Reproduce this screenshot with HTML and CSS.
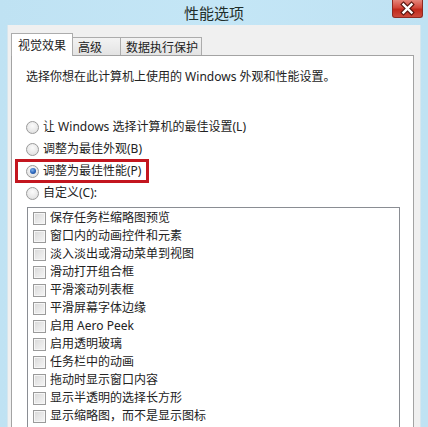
FILE: index.html
```html
<!DOCTYPE html>
<html lang="zh-CN">
<head>
<meta charset="utf-8">
<title>性能选项</title>
<link rel="stylesheet" href="styles.css">
</head>
<body>
<div class="window">
  <div class="titlebar">
    <span class="spacer"></span>
    <span class="title">性能选项</span>
    <span class="close">
      <svg width="31" height="18" viewBox="0 0 31 18">
        <path d="M11.5 4.5 L19.5 12.5 M19.5 4.5 L11.5 12.5" stroke="#5a1610" stroke-width="4.6" stroke-linecap="square" fill="none"/>
        <path d="M11.5 4.5 L19.5 12.5 M19.5 4.5 L11.5 12.5" stroke="#ffffff" stroke-width="2.4" stroke-linecap="square" fill="none"/>
      </svg>
    </span>
  </div>
  <div class="frame">
    <div class="tabs">
      <div class="tab active">视觉效果</div>
      <div class="tab tab-short">高级</div>
      <div class="tab tab-long">数据执行保护</div>
    </div>
    <div class="page">
      <p class="desc">选择你想在此计算机上使用的 Windows 外观和性能设置。</p>
      <div class="options">
        <div class="opt"><span class="radio"></span>让 Windows 选择计算机的最佳设置(L)</div>
        <div class="opt"><span class="radio"></span>调整为最佳外观(B)</div>
        <div class="opt highlight"><span class="radio checked"></span>调整为最佳性能(P)</div>
        <div class="opt"><span class="radio"></span>自定义(C):</div>
      </div>
      <div class="listbox">
        <div class="item"><span class="check"></span>保存任务栏缩略图预览</div>
        <div class="item"><span class="check"></span>窗口内的动画控件和元素</div>
        <div class="item"><span class="check"></span>淡入淡出或滑动菜单到视图</div>
        <div class="item"><span class="check"></span>滑动打开组合框</div>
        <div class="item"><span class="check"></span>平滑滚动列表框</div>
        <div class="item"><span class="check"></span>平滑屏幕字体边缘</div>
        <div class="item"><span class="check"></span>启用 Aero Peek</div>
        <div class="item"><span class="check"></span>启用透明玻璃</div>
        <div class="item"><span class="check"></span>任务栏中的动画</div>
        <div class="item"><span class="check"></span>拖动时显示窗口内容</div>
        <div class="item"><span class="check"></span>显示半透明的选择长方形</div>
        <div class="item"><span class="check"></span>显示缩略图，而不是显示图标</div>
      </div>
    </div>
  </div>
</div>
</body>
</html>
```

FILE: styles.css
```css
html, body {
  margin: 0;
  padding: 0;
}
body {
  width: 428px;
  height: 427px;
  overflow: hidden;
  background: linear-gradient(90deg, #bfe2f3 0%, #c4e6f6 50%, #bfe2f3 100%);
  font-family: "Noto Sans", "Noto Sans CJK SC", sans-serif;
  font-size: 12px;
  color: #222;
}
.window {
  height: 427px;
  display: flex;
  flex-direction: column;
}
.titlebar {
  height: 25px;
  flex: none;
  display: grid;
  grid-template-columns: 1fr auto 1fr;
  align-items: start;
}
.title {
  font-family: "Noto Sans CJK SC", sans-serif;
  font-size: 15px;
  line-height: 25px;
  color: #1f2e2a;
}
.close {
  justify-self: end;
  margin-right: 5px;
  width: 31px;
  height: 18px;
  box-sizing: border-box;
  border: 1px solid #8e2a22;
  border-top: none;
  border-radius: 0 0 3px 3px;
  background: linear-gradient(#e6857a 0%, #d3473a 45%, #c1291c 55%, #cc4a3c 100%);
  display: flex;
}
.close svg {
  display: block;
  margin: 0 -1px;
}
.frame {
  flex: 1;
  margin: 0 7px;
  background: #f0f0f0;
  padding: 8px 7px 0 4px;
  display: flex;
  flex-direction: column;
  min-height: 0;
  box-shadow: inset 1px 0 0 #d6e6ee, inset -1px 0 0 #d6e6ee;
}
.tabs {
  display: flex;
  align-items: flex-end;
  height: 22px;
  flex: none;
}
.tab {
  height: 18px;
  box-sizing: border-box;
  border: 1px solid #acacac;
  border-bottom: none;
  margin-left: -1px;
  padding: 1px 4px 0 5px;
  line-height: 16px;
  background: linear-gradient(#f3f3f3, #e3e3e3);
  font-family: "Noto Sans CJK SC", sans-serif;
  white-space: nowrap;
}
.tab.active {
  margin-left: 0;
  height: 23px;
  padding: 1px 6px 0 6px;
  line-height: 20px;
  background: #fff;
  margin-bottom: -1px;
  position: relative;
  z-index: 1;
}
.tab.tab-short {
  padding-right: 18px;
}
.tab.tab-long {
  padding-right: 3px;
}
.page {
  flex: 1;
  border: 1px solid #a3a3a3;
  border-bottom: none;
  background: #fff;
  padding: 12px 13px 0 14px;
  overflow: hidden;
  min-height: 0;
}
.desc {
  margin: 0;
  line-height: 18px;
  white-space: nowrap;
}
.options {
  margin-top: 32px;
  display: flex;
  flex-direction: column;
  gap: 4px;
}
.opt {
  display: flex;
  align-items: center;
  gap: 4px;
  height: 18px;
  line-height: 18px;
  white-space: nowrap;
}
.opt.highlight {
  align-self: flex-start;
  border: 3px solid #c3161f;
  margin: -3px 0 -3px -11px;
  padding: 0 5px 0 8px;
}
.radio {
  width: 13px;
  height: 13px;
  box-sizing: border-box;
  border-radius: 50%;
  border: 1px solid #9a9a9a;
  background: radial-gradient(circle at 50% 35%, #fbfbfb 0%, #e8e8e8 60%, #d8d8d8 100%);
  flex: none;
  display: flex;
  align-items: center;
  justify-content: center;
}
.radio.checked::after {
  content: "";
  width: 6px;
  height: 6px;
  border-radius: 50%;
  background: radial-gradient(circle at 40% 35%, #7eb2ee 0%, #2a63b8 55%, #173f84 100%);
}
.listbox {
  margin: 5px 0 0 1px;
  height: 260px;
  border: 1px solid #8a8d93;
  padding-top: 1px;
}
.item {
  display: flex;
  align-items: center;
  gap: 4px;
  height: 18px;
  line-height: 18px;
  padding-left: 5px;
  white-space: nowrap;
}
.check {
  width: 13px;
  height: 13px;
  box-sizing: border-box;
  border: 1px solid #9a9a9a;
  background: linear-gradient(135deg, #d8d8d8 0%, #e9e9e9 55%, #f5f5f5 100%);
  box-shadow: inset 0 0 0 1px #f6f6f6;
  flex: none;
}
```
